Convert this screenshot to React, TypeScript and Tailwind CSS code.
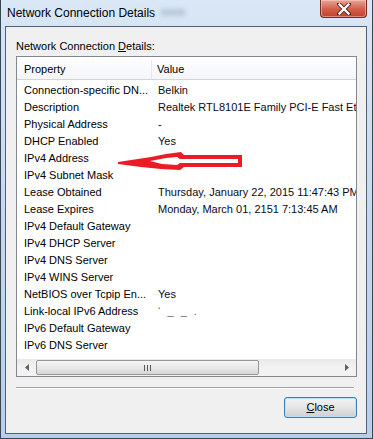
import React from "react";

const rows: [string, string][] = [
  ["Connection-specific DN...", "Belkin"],
  ["Description", "Realtek RTL8101E Family PCI-E Fast Ethernet NIC (NDIS 6.20)"],
  ["Physical Address", "-"],
  ["DHCP Enabled", "Yes"],
  ["IPv4 Address", ""],
  ["IPv4 Subnet Mask", ""],
  ["Lease Obtained", "Thursday, January 22, 2015 11:47:43 PM"],
  ["Lease Expires", "Monday, March 01, 2151 7:13:45 AM"],
  ["IPv4 Default Gateway", ""],
  ["IPv4 DHCP Server", ""],
  ["IPv4 DNS Server", ""],
  ["IPv4 WINS Server", ""],
  ["NetBIOS over Tcpip En...", "Yes"],
  ["Link-local IPv6 Address", ""],
  ["IPv6 Default Gateway", ""],
  ["IPv6 DNS Server", ""],
];

const font = { fontFamily: '"Liberation Sans", Arial, sans-serif' };

export default function App() {
  return (
    <div
      className="relative w-[373px] h-[439px] flex flex-col border-x border-b border-[#3a4656] bg-gradient-to-b from-[#d9e7f6] via-[#c5d8ee] to-[#b9cfe9] text-[11px] text-black"
      style={font}
    >
      {/* Title bar */}
      <div className="h-[26px] flex items-start relative">
        <div className="pl-[6px] pt-[5px] text-[12px] leading-[16px] text-black">Network Connection Details</div>
        <div className="ml-[6px] mt-[9px] w-[24px] h-[7px] bg-[#aebfd1] blur-[2px] opacity-70" />
        <div className="absolute left-[319px] top-0 w-[47px] h-[18px] rounded-b-[4px] border border-t-0 border-[#7b2b20] bg-gradient-to-b from-[#e8a698] via-[#d2624c] to-[#c2402a] flex items-center justify-center shadow-[inset_0_0_0_1px_rgba(255,210,200,0.5)]">
          <svg width="14" height="12" viewBox="0 0 14 12">
            <path d="M2 1 L12 11 M12 1 L2 11" stroke="#5a1a12" strokeWidth="4" strokeLinecap="square" />
            <path d="M2.5 1.5 L11.5 10.5 M11.5 1.5 L2.5 10.5" stroke="#ffffff" strokeWidth="2.4" strokeLinecap="square" />
          </svg>
        </div>
      </div>

      {/* Client area */}
      <div className="ml-[4px] mr-[5px] mb-[4px] flex-1 border border-[#4f6177] bg-[#f0f0f0] flex flex-col pl-[10px] pr-[9px]">
        <div className="pt-[12px] h-[29px] leading-[15px] text-[11px]">
          Network Connection <span className="underline">D</span>etails:
        </div>
        <div className="h-[321px] border border-[#828790] bg-white flex flex-col relative overflow-hidden">
          {/* header */}
          <div className="h-[23px] flex border-b border-[#d5d5d5] bg-gradient-to-b from-white to-[#f3f5f8] text-[11px] pt-[3px]">
            <div className="w-[135px] border-r border-[#e3e6ea] pl-[7px] flex items-center">Property</div>
            <div className="flex-1 pl-[5px] flex items-center">Value</div>
          </div>
          <div className="flex-1 pt-[2px] flex flex-col">
            {rows.map(([p, v], i) => (
              <div key={i} className="h-[17px] flex items-center text-[11px] leading-[17px] whitespace-nowrap">
                <div className="w-[135px] pl-[7px] overflow-hidden">{p}</div>
                <div className="flex-1 pl-[6px] overflow-hidden text-[#0a0a1a]">
                  {p === "Link-local IPv6 Address" ? (
                    <span className="text-[#666] tracking-[2px]">&#8216; _ _ .</span>
                  ) : (
                    v
                  )}
                </div>
              </div>
            ))}
          </div>
          {/* horizontal scrollbar */}
          <div className="h-[17px] flex items-center bg-gradient-to-b from-[#e9e9e9] via-[#f2f2f2] to-[#f2f2f2]">
            <div className="w-[19px] h-full flex items-center justify-center">
              <svg width="4" height="7" viewBox="0 0 4 7"><path d="M4 0 L0 3.5 L4 7 Z" fill="#606060" /></svg>
            </div>
            <div className="w-[223px] h-[15px] rounded-[2px] border border-[#979797] bg-gradient-to-b from-[#f4f4f4] via-[#e8e8e8] to-[#d6d6d6] flex items-center justify-center gap-[2px]">
              <div className="w-px h-[6px] bg-[#555]" />
              <div className="w-px h-[6px] bg-[#555]" />
              <div className="w-px h-[6px] bg-[#555]" />
            </div>
            <div className="flex-1" />
            <div className="w-[19px] h-full flex items-center justify-center">
              <svg width="4" height="7" viewBox="0 0 4 7"><path d="M0 0 L4 3.5 L0 7 Z" fill="#606060" /></svg>
            </div>
          </div>
        </div>
        <div className="mt-[10px] mr-[3px] h-[2px] border-t border-[#a0a0a0] border-b border-b-white" />
        <div className="mt-[8px] flex justify-end">
          <div className="w-[73px] h-[21px] rounded-[3px] border border-[#3c7fb1] bg-gradient-to-b from-[#f2f2f2] via-[#e6e6e6] to-[#cfcfcf] shadow-[inset_0_0_0_1px_#b8e0f7] flex items-center justify-center text-[11px]">
            <span><span className="underline">C</span>lose</span>
          </div>
        </div>
      </div>

      {/* Red annotation arrow */}
      <svg className="absolute left-0 top-0 pointer-events-none" width="373" height="439" viewBox="0 0 373 439">
        <path
          d="M117 162 L150 157 L165 154 L180 152 L183 155 L241 155 L241 167 L183 167 L179 170 L160 169 L140 167 L117 164 Z"
          fill="#ed1c24"
        />
        <path
          d="M149 161 L165 158 L176 157 L179 159 L237 159 L237 163 L179 163 L176 165 L161 164 Z"
          fill="#ffffff"
        />
      </svg>
    </div>
  );
}
